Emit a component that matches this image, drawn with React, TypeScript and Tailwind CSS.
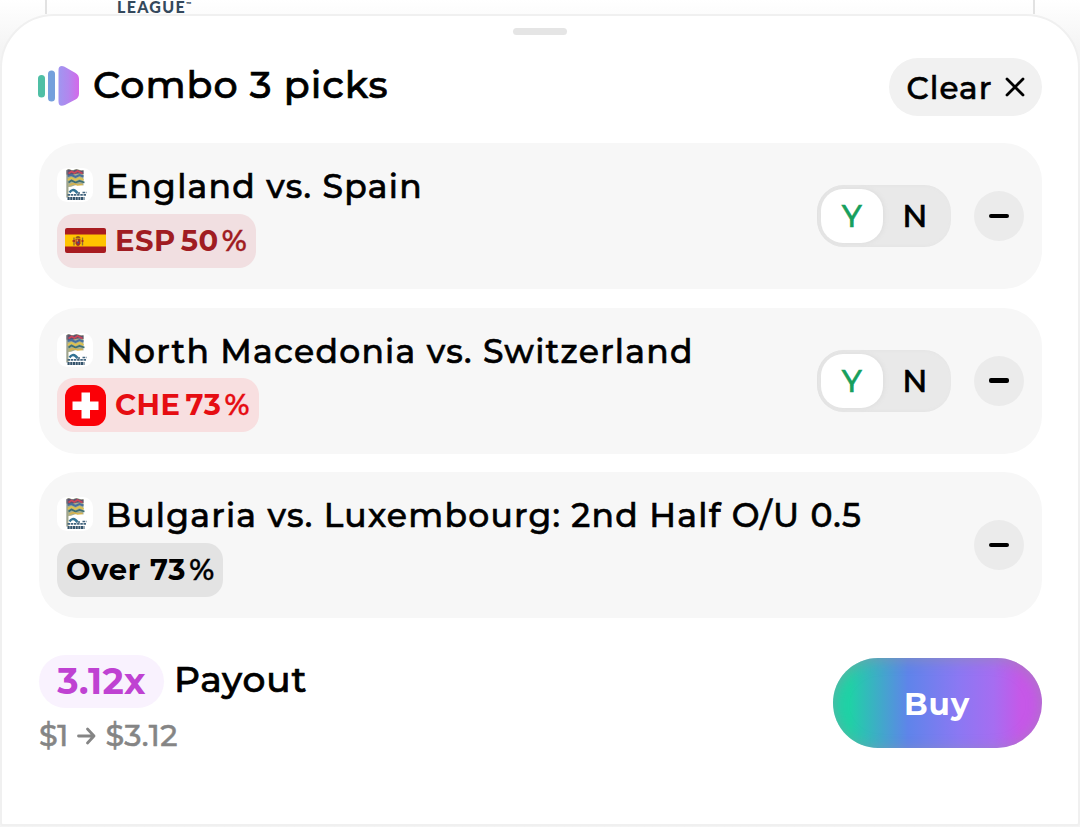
import { clsx } from 'clsx'

type Pick = {
  title: string
  code: string
  codeClass: string
  percent: string
  flag?: 'esp' | 'che'
  badge: string
  toggle: boolean
}

const PICKS: Pick[] = [
  {
    title: 'England vs. Spain',
    code: 'ESP',
    codeClass: 'tracking-[0.5px] mr-[5px]',
    percent: '50',
    flag: 'esp',
    badge: 'w-[199px] bg-[#f1dfe1] text-[#a01c22]',
    toggle: true,
  },
  {
    title: 'North Macedonia vs. Switzerland',
    code: 'CHE',
    codeClass: 'tracking-[0.5px] mr-[5px]',
    percent: '73',
    flag: 'che',
    badge: 'w-[202px] bg-[#f8dfe0] text-[#e60d12]',
    toggle: true,
  },
  {
    title: 'Bulgaria vs. Luxembourg: 2nd Half O/U 0.5',
    code: 'Over',
    codeClass: 'tracking-[0.7px] ml-px mr-[9px]',
    percent: '73',
    badge: 'w-[166px] bg-[#e3e3e3] text-black pt-px',
    toggle: false,
  },
]

function ComboLogo() {
  return (
    <svg className="-mt-[2px] -ml-px" width="42" height="42" viewBox="0 0 42 42" fill="none">
      <defs>
        <linearGradient id="combo" x1="20" y1="0" x2="41" y2="0" gradientUnits="userSpaceOnUse">
          <stop offset="0.1" stopColor="#a394f0" />
          <stop offset="0.5" stopColor="#b286ee" />
          <stop offset="1" stopColor="#d468ea" />
        </linearGradient>
      </defs>
      <rect x="0" y="10" width="7" height="22.5" rx="3.5" fill="#4fbfa5" />
      <rect x="10" y="5.5" width="7" height="31" rx="3.5" fill="#74a0dc" />
      <path
        d="M20.5 5Q20.5.5 25 1.2Q26 1.400 27 2L37.500 8Q41 10 41 14V28.500Q41 32.500 37.500 34.500L27 40Q20.500 42.500 20.500 36.500Z"
        fill="url(#combo)"
      />
    </svg>
  )
}

function LeagueLogo() {
  return (
    <svg width="36" height="34" viewBox="0 0 36 34">
      <rect width="36" height="34" rx="10" fill="#fff" />
      <g transform="translate(0.5 -1)">
        <path d="M9 3Q11 1.500 13 2.500T17 2.500T21 2.500T26 3V18.500Q21 17 17 18.500T11 20V30H9Z" fill="#a9ae8d" />
        <path d="M9 3.500Q11 2 13 3T17 3T21 3T26 3.500V7Q20 6 16 7.500T9 7.500Z" fill="#5b5270" />
        <path d="M11 6.500L14 4.500L17 6L20 4L25 6.500" stroke="#cc4658" strokeWidth="1.600" fill="none" />
        <path d="M10 9L14 8L18 10L22 8L26 9.500" stroke="#47709f" strokeWidth="2" fill="none" />
        <path d="M10 13L14 11L18 13L22 11L26 13" stroke="#dfc24c" strokeWidth="1.800" fill="none" />
        <path d="M11 15.500L14 13.500L18 15.500L22 14L27 15.500" stroke="#3c6e75" strokeWidth="1.700" fill="none" />
        <path d="M12 18L16 16.500L20 18L25 17.500" stroke="#d8b34a" strokeWidth="1.500" fill="none" />
        <path d="M9.500 3V31" stroke="#8a9290" strokeWidth="0.700" />
        <path d="M12 25.500Q15 21.500 18 24L20 26" stroke="#337394" strokeWidth="2.500" fill="none" />
        <path d="M10 27.800h19M20 26h3M25 25.500h4" stroke="#43657f" strokeWidth="1.700" strokeDasharray="2.500 0.700" />
        <path d="M10 31.500H27" stroke="#34536b" strokeWidth="3" strokeDasharray="2.200 0.500" />
      </g>
    </svg>
  )
}

function SpainFlag() {
  return (
    <svg width="41" height="25" viewBox="0 0 41 25">
      <clipPath id="esp">
        <rect width="41" height="25" rx="2" />
      </clipPath>
      <g clipPath="url(#esp)">
        <rect width="41" height="25" fill="#a81b20" />
        <rect y="6.500" width="41" height="12" fill="#ffc400" />
      </g>
      <path d="M9 9.500V17.500M17.500 9.500V17.500" stroke="#8f6a3c" strokeWidth="1.400" />
      <path d="M7.500 13h2.500M16.500 13h2" stroke="#a61d20" strokeWidth="1.500" />
      <path d="M10.500 11h5v4.500q-1 2.500-2.500 2.500t-2.500-2.500Z" fill="#a3302c" />
      <path d="M10.500 10.500Q10.500 8 13 8t2.500 2.500Z" fill="#94591f" />
      <path d="M11.500 11.500h1.500v2h-1.500Z" fill="#e0a23c" />
      <circle cx="13.200" cy="14.400" r="1" fill="#3f5686" />
    </svg>
  )
}

function SwissFlag() {
  return (
    <svg width="41" height="41" viewBox="0 0 41 41">
      <rect width="41" height="41" rx="12" fill="#fb0007" />
      <path d="M16.500 7.500h8.500v9h8.500v8.500H25v8.500h-8.500V25h-9v-8.500h9Z" fill="#fff" />
    </svg>
  )
}

function YesNo() {
  return (
    <div className="flex h-[62px] w-[134px] rounded-[27px] bg-[#e9e9e9] p-1 text-[31px] leading-[54px] font-medium shadow-[inset_2px_0_4px_#e2e2e2]">
      <div className="w-[63px] rounded-[22px] bg-white text-center text-[#179f5d] shadow-[1px_0_5px_#dcdcdc] [-webkit-text-stroke:0.5px_#179f5d]">Y</div>
      <div className="w-[64px] text-center [-webkit-text-stroke:0.6px_black]">N</div>
    </div>
  )
}

function PickCard({ pick }: { pick: Pick }) {
  return (
    <div className="flex h-[146px] items-center rounded-[38px] bg-[#f7f7f7] px-[18px]">
      <div className="flex-1 pt-px">
        <div className="flex h-[48px] items-center pb-[3px]">
          <span className="-mt-[6px]"><LeagueLogo /></span>
          <span className="-mt-[4px] ml-[13px] text-[33px] leading-[40px] font-medium tracking-[1.26px] whitespace-nowrap [-webkit-text-stroke:0.6px_black]">
            {pick.title}
          </span>
        </div>
        <div className={clsx('flex h-[54px] items-center rounded-[17px] pl-2 text-[29px] leading-[40px] font-bold whitespace-nowrap', pick.badge)}>
          {pick.flag && (
            <span className="mr-[9px]">{pick.flag === 'esp' ? <SpainFlag /> : <SwissFlag />}</span>
          )}
          <span className={pick.codeClass}>{pick.code}</span>
          <span className="tracking-[0.6px]">{pick.percent}</span>
          <span className="ml-[3px] font-semibold [-webkit-text-stroke:0.3px_currentColor]">%</span>
        </div>
      </div>
      {pick.toggle && <YesNo />}
      <div className="ml-[23px] flex size-[50px] items-center justify-center rounded-full bg-[#ebebeb]">
        <div className="h-[4.500px] w-[20px] rounded-[2px] bg-black" />
      </div>
    </div>
  )
}

export default function App() {
  return (
    <div className="flex h-[827px] w-[1080px] flex-col overflow-hidden bg-linear-to-b from-white to-[#f4f4f4] to-[50px] font-['Montserrat','Inter',sans-serif] text-black">
      <div className="mx-[45px] h-[14px] border-x-2 border-[#e2e2e2] pl-[70px]">
        <div className="flex h-[14px] items-start font-['Lato',sans-serif] text-[16px] leading-[14px] font-black tracking-[1.3px] text-[#34495c]">
          LEAGUE<span className="text-[7px] leading-[8px] tracking-normal">™</span>
        </div>
      </div>
      <div className="relative -mb-10 flex h-[812px] shrink-0 flex-col rounded-t-[54px] rounded-b-[3px] border-2 border-[#f0f0f0] bg-white pr-[36.500px] pl-[37px]">
        <div className="mt-[12px] h-[7px] w-[54px] self-center rounded-full bg-[#e5e5e5]" />
        <div className="mt-[23px] flex h-[58px] items-center justify-between">
          <div className="flex items-center">
            <ComboLogo />
            <h1 className="-mt-[4px] ml-[13px] text-[38px] leading-[48px] font-medium tracking-[1px] [-webkit-text-stroke:0.7px_black]">Combo 3 picks</h1>
          </div>
          <button className="flex h-[58px] w-[153px] items-center rounded-full bg-[#f1f1f1] pl-[18px] text-[31px] font-medium">
            <span className="mt-[2px] tracking-[1.1px] [-webkit-text-stroke:0.6px_black]">Clear</span>
            <svg className="mr-[17px] ml-auto" width="20" height="20" viewBox="0 0 20 20">
              <path d="M2 2L18 18M18 2L2 18" stroke="black" strokeWidth="2.800" strokeLinecap="round" />
            </svg>
          </button>
        </div>
        <div className="mt-[27px] flex flex-col gap-[18.500px]">
          {PICKS.map((pick) => (
            <PickCard key={pick.title} pick={pick} />
          ))}
        </div>
        <div className="mt-[36.500px] flex justify-between">
          <div>
            <div className="flex h-[53px] items-center">
              <span className="h-[53px] w-[125px] rounded-full bg-[#f9f2fe] text-center text-[36px] leading-[53px] font-bold tracking-[0.3px] text-[#bf42d2]">3.12x</span>
              <span className="-mt-[5px] ml-[10px] text-[36px] leading-[48px] font-medium tracking-[0.85px] [-webkit-text-stroke:0.7px_black]">Payout</span>
            </div>
            <div className="mt-[8px] flex h-[40px] items-center text-[30px] leading-[40px] font-medium text-[#858585] [-webkit-text-stroke:0.5px_#858585]">
              <span>$1</span>
              <svg className="mx-[9px]" width="19" height="20" viewBox="0 0 19 20" fill="none">
                <path d="M1.500 10H17M10.500 3L17 10L10.500 17" stroke="#858585" strokeWidth="2.800" strokeLinecap="round" strokeLinejoin="round" />
              </svg>
              <span className="tracking-[0.4px]">$3.12</span>
            </div>
          </div>
          <button className="mt-[3.500px] h-[90px] w-[209px] rounded-full bg-[linear-gradient(90deg,#1fd2a6_8%,#5f84ea_36%,#8b78f3_60%,#a66df1_77%,#c658e8_90%)] pt-[3px] text-[31px] font-bold tracking-[0.9px] text-white shadow-[inset_0_2px_14px_#9292a599]">
            Buy
          </button>
        </div>
      </div>
    </div>
  )
}
